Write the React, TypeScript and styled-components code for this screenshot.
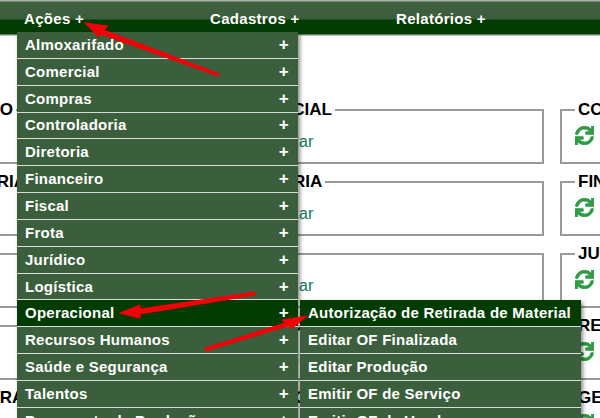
import React, { FunctionComponent } from 'react';
import styled, { createGlobalStyle } from 'styled-components';
import { FaSync } from 'react-icons/fa';

const GlobalStyle = createGlobalStyle`
  html, body {
    background: #fff;
    height: 418px;
    margin: 0;
    overflow: hidden;
    width: 600px;
  }
`;

const Page_ = styled.div`
  font-family: "Liberation Sans", Arial, sans-serif;
  height: 418px;
  overflow: hidden;
  position: relative;
  width: 600px;
`;

const Nav_ = styled.nav`
  background: linear-gradient(#a9b3a9 0, #a9b3a9 1px, #3f6140 2px, #3c5e3d 19px, #033c03 20px, #033c03 34px, #b8c4b8 35px);
  display: flex;
  height: 36px;
  padding-left: 17px;
`;

const NavItem_ = styled.div`
  color: #fff;
  font-size: 15px;
  font-weight: bold;
  letter-spacing: 0.3px;
  line-height: 38px;
  padding-left: 7px;
  position: relative;
  width: 179px;
`;

const Menu_ = styled.ul`
  box-shadow: 2px 2px 4px rgba(0, 0, 0, 0.45);
  left: ${props => props.$left}px;
  list-style: none;
  margin: 0;
  padding: 0;
  position: absolute;
  top: ${props => props.$top}px;
  width: 281px;
  z-index: 2;
`;

const MenuRow_ = styled.li`
  align-items: center;
  background: ${props => (props.$active ? '#023c02' : '#3b5f3d')};
  border-bottom: 1px solid #d6dcd6;
  box-sizing: border-box;
  color: #fff;
  display: flex;
  font-size: 15px;
  font-weight: bold;
  height: 26.85px;
  justify-content: space-between;
  letter-spacing: 0.25px;
  line-height: 26px;
  padding: 0 9px 0 8px;
  position: relative;
`;

const Plus_ = styled.span`
  font-size: 17px;
`;

const Grid_ = styled.main`
  display: grid;
  grid-template-columns: 338px 333px 333px;
  column-gap: 16px;
  margin: 65px 0 0 -143px;
  row-gap: 9px;
  width: 1040px;
`;

const Box_ = styled.fieldset`
  border: 2px solid #9a9a9a;
  box-sizing: border-box;
  height: 63px;
  margin: 0;
  min-width: 0;
  padding: 0 0 0 13px;
`;

const Legend_ = styled.legend`
  color: #000;
  font-size: 17px;
  font-weight: bold;
  line-height: 18px;
  padding: 0 3px;
`;

const Reload_ = styled.a`
  align-items: flex-start;
  color: #0a7a64;
  display: flex;
  font-size: 16px;
  gap: 6px;
  padding-top: 7px;

  svg {
    color: #2f9a47;
    flex: none;
    stroke: currentColor;
    stroke-width: 24px;
  }
`;

const ReloadLabel_ = styled.span`
  margin-top: 7px;
`;

const Arrows_ = styled.svg`
  left: 0;
  pointer-events: none;
  position: absolute;
  top: 0;
  z-index: 3;
`;

const sectors = [
  'ALMOXARIFADO', 'COMERCIAL', 'COMPRAS',
  'CONTROLADORIA', 'DIRETORIA', 'FINANCEIRO',
  'FISCAL', 'FROTA', 'JURÍDICO',
  'LOGÍSTICA', 'OPERACIONAL', 'RECURSOS HUMANOS',
  'COORDENADORA', 'TALENTOS', 'GERENCIAL',
];

const mainItems = [
  'Almoxarifado', 'Comercial', 'Compras', 'Controladoria', 'Diretoria',
  'Financeiro', 'Fiscal', 'Frota', 'Jurídico', 'Logística', 'Operacional',
  'Recursos Humanos', 'Saúde e Segurança', 'Talentos', 'Pagamento de Produção',
];

const subItems = [
  'Autorização de Retirada de Material', 'Editar OF Finalizada', 'Editar Produção',
  'Emitir OF de Serviço', 'Emitir OF de Venda',
];

const App: FunctionComponent = () => (
  <Page_>
    <GlobalStyle />
    <Nav_>
      <NavItem_>
        Ações +
        <Menu_ $left={0} $top={32}>
          {mainItems.map(item => (
            <MenuRow_ key={item} $active={item === 'Operacional'}>
              {item}
              <Plus_>+</Plus_>
              {item === 'Operacional' && (
                <Menu_ $left={283} $top={0}>
                  {subItems.map((sub, index) => (
                    <MenuRow_ key={sub} $active={index === 0}>{sub}</MenuRow_>
                  ))}
                </Menu_>
              )}
            </MenuRow_>
          ))}
        </Menu_>
      </NavItem_>
      <NavItem_>Cadastros +</NavItem_>
      <NavItem_>Relatórios +</NavItem_>
    </Nav_>
    <Grid_>
      {sectors.map(sector => (
        <Box_ key={sector}>
          <Legend_>{sector}</Legend_>
          <Reload_>
            <FaSync size={19} />
            <ReloadLabel_>Atualizar</ReloadLabel_>
          </Reload_>
        </Box_>
      ))}
    </Grid_>
    <Arrows_ width="600" height="418" viewBox="0 0 600 418">
      <g fill="#f40008" stroke="#f40008" strokeLinecap="round" strokeWidth="1">
        <path d="M85 23 L108 26 L104 30 L220 74 L218 76 L101 34 L99 37 Z" />
        <path d="M120 313 L140 305 L140 309 L255 292 L255 295 L140 314 L140 318 Z" />
        <path d="M307 316 L282 320 L285 323 L205 348 L206 351 L288 326 L292 328 Z" />
      </g>
    </Arrows_>
  </Page_>
);

export default App;
